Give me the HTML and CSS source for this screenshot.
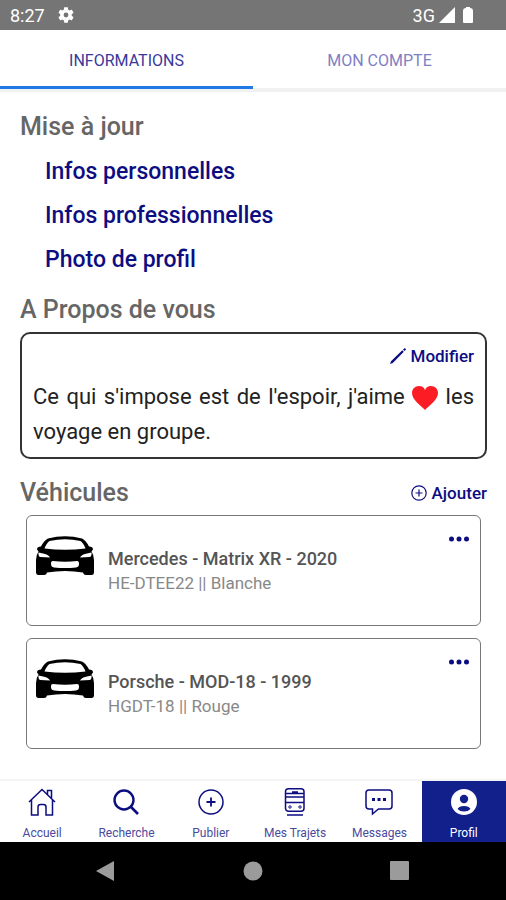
FILE: index.html
```html
<!DOCTYPE html>
<html lang="fr">
<head>
<meta charset="utf-8">
<meta name="viewport" content="width=device-width, initial-scale=1">
<title>Profil</title>
<link rel="stylesheet" href="styles.css">
</head>
<body>
<svg width="0" height="0" class="defs" aria-hidden="true">
  <symbol id="car" viewBox="0 0 58 40">
    <path fill-rule="evenodd" d="M12 2.500Q29-2 46 2.500Q50 4.500 53 10.500Q57 10.500 57 13.500L55.500 15.500Q58 19 58 24V36Q58 39 55.500 39H50Q47.500 39 47 36.500Q29 33.500 11 36.500Q10.500 39 8 39H2.500Q0 39 0 36V24Q0 19 2.500 15.500L1 13.500Q1 10.500 5 10.500Q8 4.500 12 2.500ZM13.500 5Q10.500 7 8.500 12.500Q29 15 49.500 12.500Q47.500 7 44.500 5Q29 1.500 13.500 5ZM2.500 16.500Q2 20 4 21L14 21.500Q13 18 2.500 16.500ZM55.500 16.500Q56 20 54 21L44 21.500Q45 18 55.500 16.500ZM17 25Q15 25 15 27V28Q15 31 18 31.500Q29 32.500 40 31.500Q43 31 43 28V27Q43 25 41 25Q29 26.500 17 25Z"/>
  </symbol>
  <symbol id="dots" viewBox="0 0 20 6">
    <circle cx="2.500" cy="3" r="2.500"/><circle cx="10" cy="3" r="2.500"/><circle cx="17.500" cy="3" r="2.500"/>
  </symbol>
</svg>
<div class="screen">
  <header class="status">
    <span>8:27</span>
    <svg class="gear" viewBox="2 2 20 20" width="16" height="16" aria-hidden="true"><path fill="#fff" d="M19.140 12.940c.04-.3.06-.61.06-.94 0-.32-.02-.64-.07-.94l2.030-1.580c.18-.14.23-.41.12-.61l-1.920-3.320c-.12-.22-.37-.29-.59-.22l-2.390.96c-.5-.38-1.030-.7-1.620-.94l-.36-2.540c-.04-.24-.24-.41-.48-.41h-3.840c-.24 0-.43.17-.47.41l-.36 2.540c-.59.24-1.130.57-1.620.94l-2.390-.96c-.22-.08-.47 0-.59.22L2.740 8.870c-.12.21-.08.47.12.61l2.030 1.580c-.05.3-.09.63-.09.94s.02.64.07.94l-2.030 1.580c-.18.14-.23.41-.12.61l1.920 3.320c.12.22.37.29.59.22l2.390-.96c.5.38 1.030.7 1.620.94l.36 2.540c.05.24.24.41.48.41h3.840c.24 0 .44-.17.47-.41l.36-2.540c.59-.24 1.130-.56 1.620-.94l2.390.96c.22.08.47 0 .59-.22l1.920-3.320c.12-.22.07-.47-.12-.61l-2.010-1.580zM12 15a3 3 0 1 1 0-6 3 3 0 0 1 0 6z"/></svg>
    <span class="network">3G</span>
    <svg viewBox="0 0 16 16" width="16" height="16" aria-hidden="true"><path fill="#fff" d="M16 0V16H0z"/></svg>
    <svg class="battery" viewBox="0 0 10 16" width="10" height="16" aria-hidden="true"><path fill="#fff" d="M3 0h4v1q3 0 3 3v11q0 1-1 1H1q-1 0-1-1V4q0-3 3-3z"/></svg>
  </header>
  <nav class="tabs">
    <button type="button" class="tab active">INFORMATIONS</button>
    <button type="button" class="tab">MON COMPTE</button>
  </nav>
  <main>
    <h2>Mise à jour</h2>
    <ul class="links">
      <li><a href="#perso">Infos personnelles</a></li>
      <li><a href="#pro">Infos professionnelles</a></li>
      <li><a href="#photo">Photo de profil</a></li>
    </ul>
    <h2>A Propos de vous</h2>
    <section class="about">
      <button type="button" class="action">
        <svg viewBox="0 0 16 16" width="16" height="16" aria-hidden="true"><path d="M0 16L1 13.300 12.300 2.300 13.800 3.800 2.800 14.900zM13 1.600L14.200.4Q15 0 15.700.7T15.600 2L14.500 3.100z"/></svg>
        Modifier
      </button>
      <p>Ce qui s'impose est de l'espoir, j'aime <svg class="heart" viewBox="0 0 26 24" width="26" height="24" aria-hidden="true"><path fill="#fc1d24" d="M13 24C9 19.500 0 14 0 7C0 3 3 0 7 0C10 0 12 1.500 13 4C14 1.500 16 0 19 0C23 0 26 3 26 7C26 14 17 19.500 13 24Z"/></svg> les voyage en groupe.</p>
    </section>
    <div class="heading-row">
      <h2>Véhicules</h2>
      <button type="button" class="action">
        <svg viewBox="0 0 16 16" width="16" height="16" aria-hidden="true"><path fill="none" stroke="#0d0d82" stroke-width="1.200" d="M8 .8a7.200 7.200 0 1 0 0 14.400A7.200 7.200 0 0 0 8 .8zM8 4.500v7M4.500 8h7"/></svg>
        Ajouter
      </button>
    </div>
    <div class="cards">
      <article class="card">
        <svg class="car" width="58" height="40" aria-hidden="true"><use href="#car"/></svg>
        <div class="info"><h3>Mercedes - Matrix XR - 2020</h3><p>HE-DTEE22 || Blanche</p></div>
        <button type="button" class="more" aria-label="Options"><svg width="20" height="6"><use href="#dots"/></svg></button>
      </article>
      <article class="card">
        <svg class="car" width="58" height="40" aria-hidden="true"><use href="#car"/></svg>
        <div class="info"><h3>Porsche - MOD-18 - 1999</h3><p>HGDT-18 || Rouge</p></div>
        <button type="button" class="more" aria-label="Options"><svg width="20" height="6"><use href="#dots"/></svg></button>
      </article>
    </div>
  </main>
  <nav class="bottom">
    <a href="#accueil"><svg viewBox="0 0 28 28" width="28" height="28"><path d="M1 14L14 1.500 27 14M19.500 6.500V2.500h4v8M3.500 12v15H10V19q0-2.500 2.500-2.500h3Q18 16.500 18 19v8h6.500V12" stroke-width="1.500"/></svg>Accueil</a>
    <a href="#recherche"><svg viewBox="0 0 28 28" width="28" height="28"><circle cx="12" cy="12" r="9.500" stroke-width="2.400"/><path d="M19 19l7 7" stroke-width="2.600"/></svg>Recherche</a>
    <a href="#publier"><svg viewBox="0 0 28 28" width="28" height="28"><circle cx="14" cy="14" r="12" stroke-width="1.500"/><path d="M14 9.500v9M9.500 14h9" stroke-width="1.800"/></svg>Publier</a>
    <a href="#trajets"><svg viewBox="0 0 28 28" width="28" height="28"><rect x="4.500" y="0.800" width="18.500" height="22.500" rx="3" stroke-width="1.500"/><path d="M4.500 5.500h18.500M4.500 9h18.500M4.500 14.500h18.500M11 4h6M6 27h16" stroke-width="1.500"/><circle cx="9" cy="19" r="1.200"/><circle cx="19" cy="19" r="1.200"/></svg>Mes Trajets</a>
    <a href="#messages"><svg viewBox="0 0 28 28" width="28" height="28"><path d="M4 2h20q3 0 3 3v13q0 3-3 3H13.500L7.500 26V21H4q-3 0-3-3V5q0-3 3-3z" stroke-width="1.500"/><path d="M7 11.500h3M12.500 11.500h3M18 11.500h3" stroke-width="3"/></svg>Messages</a>
    <a href="#profil" class="current"><svg viewBox="0 0 28 28" width="28" height="28"><circle cx="14" cy="14" r="13" class="disc"/><circle cx="14" cy="11" r="4.200" class="person"/><path class="person" d="M7.500 21Q9 18 14 18T20.500 21Q18 23.500 14 23.500T7.500 21z"/></svg>Profil</a>
  </nav>
  <footer class="system">
    <button type="button" aria-label="Retour"><svg viewBox="0 0 20 22" width="20" height="22"><path d="M18 1V21L0 11z"/></svg></button>
    <button type="button" aria-label="Début"><svg viewBox="0 0 20 20" width="20" height="20"><circle cx="10" cy="10" r="9.500"/></svg></button>
    <button type="button" aria-label="Aperçu"><svg viewBox="0 0 20 20" width="20" height="20"><rect width="19" height="19" rx="1"/></svg></button>
  </footer>
</div>
</body>
</html>
```
FILE: styles.css
```css
* { box-sizing: border-box; }
body {
  margin: 0;
  background: #fff;
  color: #222;
  font-family: Roboto, "Liberation Sans", sans-serif;
}
h2, h3, p, ul { margin: 0; padding: 0; }
button { border: 0; padding: 0; background: none; font: inherit; cursor: pointer; }
a { text-decoration: none; }
svg { display: block; flex: none; }
.defs { position: absolute; }
.screen { min-height: 100vh; display: flex; flex-direction: column; }

.status {
  height: 30px;
  padding: 0 33px 0 10px;
  display: flex;
  align-items: center;
  background: #757575;
  color: #fff;
  font-size: 18px;
}
.gear { margin-left: 13px; }
.network { margin-left: auto; margin-right: 4px; }
.battery { margin-left: 8px; }

.tabs { display: flex; height: 62px; border-bottom: 4px solid #f1f1f1; }
.tab { flex: 1; height: 59px; padding-top: 4px; color: #7f7fc4; font-size: 16px; border-bottom: 3px solid transparent; }
.tab.active { color: #39399b; border-bottom-color: #2079e5; }

main { flex: 1; padding: 21px 19px 20px 20px; }
h2 { font-size: 25px; line-height: 28px; font-weight: 500; color: #666; }
.links { list-style: none; padding: 9px 0 14px 25px; }
.links li { font-size: 23px; line-height: 44px; height: 44px; font-weight: 500; }
.links a { color: #0d0d82; }

.action {
  display: flex;
  align-items: center;
  gap: 5px;
  color: #0d0d82;
  font-size: 17px;
  line-height: 22px;
  font-weight: 500;
}
.action svg { fill: #0d0d82; }
.about {
  margin: 8px 0 20px;
  padding: 11px 11px 8px;
  border: 2px solid #333;
  border-radius: 10px;
}
.about .action { margin: 0 0 12px auto; }
.about p { font-size: 22px; line-height: 35px; text-align: justify; }
.heart { display: inline-block; vertical-align: middle; }
.heading-row { display: flex; justify-content: space-between; align-items: center; }

.cards { display: grid; gap: 12px; padding: 8px 6px 0; }
.card {
  display: flex;
  align-items: flex-start;
  min-height: 111px;
  padding: 20px 11px 20px 9px;
  border: 1px solid #777;
  border-radius: 6px;
}
.info { flex: 1; margin: 11px 0 0 14px; line-height: 24px; color: #555; }
.info h3 { font-size: 18px; font-weight: 500; }
.info p { font-size: 17px; color: #888; }
.more { display: flex; }
.more svg { fill: #0d0d82; }

.bottom { display: flex; border-top: 2px solid #f4f4f4; }
.bottom a {
  flex: 1;
  height: 61px;
  padding-top: 7px;
  display: flex;
  flex-direction: column;
  align-items: center;
  gap: 9px;
  font-size: 12px;
  line-height: 16px;
  color: #4a4a9e;
}
.bottom svg { fill: none; stroke: #0d0d82; }
.bottom .current { background: #11208a; color: #fff; }
.bottom .disc { fill: #fff; stroke: none; }
.bottom .person { fill: #11208a; stroke: none; }

.system {
  height: 58px;
  padding: 0 33px;
  display: flex;
  justify-content: space-around;
  align-items: center;
  background: #000;
}
.system svg { fill: #9b9b9b; }
```
